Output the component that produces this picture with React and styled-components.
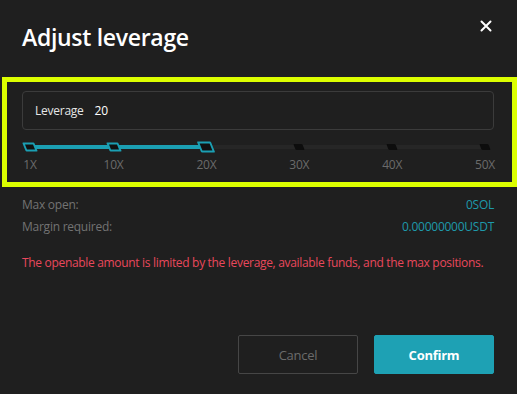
import React from "react";
import styled, { createGlobalStyle } from "styled-components";

const GlobalStyle = createGlobalStyle`
  html, body {
    margin: 0;
    padding: 0;
    background: #1f1f1f;
  }
  body {
    font-family: "Open Sans", "Noto Sans", sans-serif;
    letter-spacing: -0.25px;
  }
  * { box-sizing: border-box; }
`;

const MIN = 1;
const MAX = 50;
const marks = [1, 10, 20, 30, 40, 50];
const leverage = 20;

const pct = (v) => ((v - MIN) / (MAX - MIN)) * 100;

export default function App() {
  return (
    <Dialog>
      <GlobalStyle />
      <Header>
        <Title>Adjust leverage</Title>
        <Close aria-label="close">
          <svg width="12" height="12" viewBox="0 0 12 12">
            <path d="M1.5 1.5 L10.5 10.5 M10.5 1.5 L1.5 10.5" stroke="#fff" strokeWidth="2" strokeLinecap="round" />
          </svg>
        </Close>
      </Header>

      <Highlight>
        <InputBox>
          <InputLabel>Leverage</InputLabel>
          <InputValue>{leverage}</InputValue>
        </InputBox>
        <Slider>
          <Rail>
            <Fill style={{ width: pct(leverage) + "%" }} />
            {marks.map((m) => (
              <Mark
                key={m}
                style={{ left: pct(m) + "%" }}
                $active={m < leverage}
                $current={m === leverage}
              />
            ))}
          </Rail>
          <Labels>
            {marks.map((m) => (
              <MarkLabel key={m} style={{ left: pct(m) + "%" }}>
                {m}X
              </MarkLabel>
            ))}
          </Labels>
        </Slider>
      </Highlight>

      <Info>
        <Row>
          <Label>Max open:</Label>
          <Value>0SOL</Value>
        </Row>
        <Row>
          <Label>Margin required:</Label>
          <Value>0.00000000USDT</Value>
        </Row>
        <Warning>
          The openable amount is limited by the leverage, available funds, and the max positions.
        </Warning>
      </Info>

      <Footer>
        <Button>Cancel</Button>
        <Button $primary>Confirm</Button>
      </Footer>
    </Dialog>
  );
}

const Dialog = styled.div`
  width: 517px;
  height: 394px;
  background: #1f1f1f;
  display: flex;
  flex-direction: column;
  overflow: hidden;
`;

const Header = styled.div`
  height: 77px;
  display: flex;
  justify-content: space-between;
  align-items: flex-start;
  padding: 21px 24px 0 22px;
`;

const Title = styled.h1`
  margin: 0;
  font-size: 23px;
  font-weight: 600;
  line-height: 32px;
  letter-spacing: -0.3px;
  color: #ffffff;
`;

const Close = styled.button`
  width: 14px;
  height: 14px;
  margin-top: -2px;
  padding: 0;
  border: 0;
  background: none;
  display: flex;
  align-items: center;
  justify-content: center;
  cursor: pointer;
`;

const Highlight = styled.section`
  height: 110px;
  margin-left: 2px;
  border: 5px solid #dcff00;
  padding: 9px 18px 0 15px;
`;

const InputBox = styled.div`
  height: 39px;
  border: 1px solid #3b3b3b;
  border-radius: 4px;
  display: flex;
  align-items: center;
  gap: 11px;
  padding: 0 12px;
  font-size: 12px;
`;

const InputLabel = styled.span`
  color: #e6e6e6;
`;

const InputValue = styled.span`
  color: #ffffff;
`;

const Slider = styled.div`
  padding: 0 9px 0 8px;
  margin-top: 10px;
`;

const Rail = styled.div`
  position: relative;
  height: 14px;
  &::before {
    content: "";
    position: absolute;
    left: 0;
    right: 0;
    top: 5px;
    height: 4px;
    background: #262626;
  }
`;

const Fill = styled.div`
  position: absolute;
  left: 0;
  top: 5px;
  height: 4px;
  background: #1b9fb3;
`;

const Mark = styled.div`
  position: absolute;
  top: 50%;
  width: ${(p) => (p.$current ? "14px" : p.$active ? "12px" : "9px")};
  height: ${(p) => (p.$current ? "11px" : p.$active ? "9px" : "6px")};
  background: ${(p) => (p.$active || p.$current ? "#111111" : "#0d0d0d")};
  border: ${(p) => (p.$active || p.$current ? "2px solid #1b9fb3" : "none")};
  border-radius: 1px;
  transform: translate(-50%, -50%) skewX(22deg);
`;

const Labels = styled.div`
  position: relative;
  height: 16px;
  margin-top: 3px;
`;

const MarkLabel = styled.span`
  position: absolute;
  top: 0;
  transform: translateX(-50%);
  font-size: 12px;
  line-height: 16px;
  color: #6b6b6b;
  white-space: nowrap;
`;

const Info = styled.div`
  padding: 7px 23px 0 22px;
  font-size: 12px;
`;

const Row = styled.div`
  display: flex;
  justify-content: space-between;
  line-height: 22px;
`;

const Label = styled.span`
  color: #737373;
`;

const Value = styled.span`
  color: #1e9aab;
`;

const Warning = styled.p`
  margin: 14px 0 0;
  line-height: 22px;
  letter-spacing: -0.32px;
  color: #e9485c;
  white-space: nowrap;
`;

const Footer = styled.div`
  margin-top: auto;
  display: flex;
  justify-content: flex-end;
  gap: 16px;
  padding: 0 23px 20px;
`;

const Button = styled.button`
  width: 120px;
  height: 39px;
  border-radius: 2px;
  font-family: inherit;
  font-size: 13px;
  letter-spacing: inherit;
  font-weight: ${(p) => (p.$primary ? 700 : 400)};
  color: ${(p) => (p.$primary ? "#ffffff" : "#6b6b6b")};
  background: ${(p) => (p.$primary ? "#1ea1b4" : "transparent")};
  border: 1px solid ${(p) => (p.$primary ? "#1ea1b4" : "#464646")};
  cursor: pointer;
`;
